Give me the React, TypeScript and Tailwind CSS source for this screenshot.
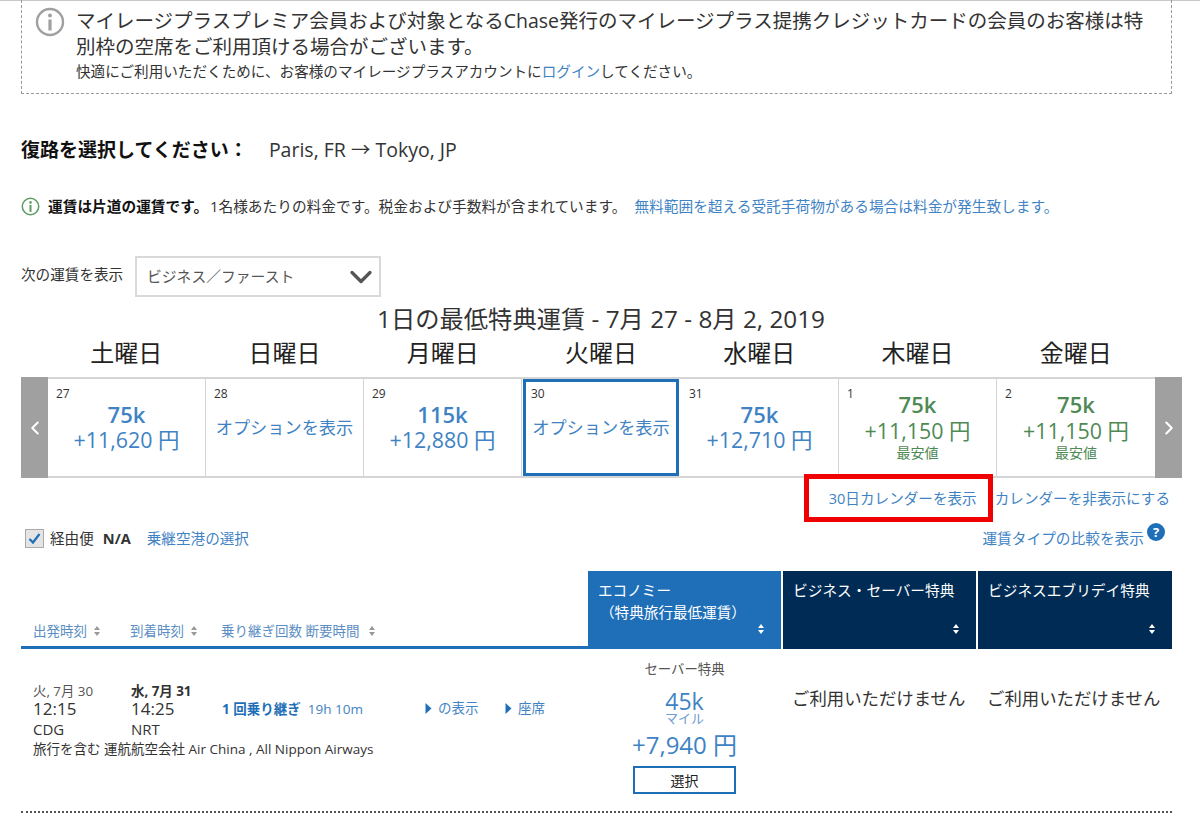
import { ChevronDown, ChevronLeft, ChevronRight } from "lucide-react";

const days = [
  { name: "土曜日", date: "27", miles: "75k", price: "+11,620 円" },
  { name: "日曜日", date: "28" },
  { name: "月曜日", date: "29", miles: "115k", price: "+12,880 円" },
  { name: "火曜日", date: "30", selected: true },
  { name: "水曜日", date: "31", miles: "75k", price: "+12,710 円" },
  { name: "木曜日", date: "1", miles: "75k", price: "+11,150 円", lowest: true },
  { name: "金曜日", date: "2", miles: "75k", price: "+11,150 円", lowest: true },
];

const InfoIcon = ({ size, color }: { size: number; color: string }) => (
  <svg width={size} height={size} viewBox="0 0 30 30" fill="none" className="shrink-0">
    <circle cx="15" cy="15" r="13" stroke={color} strokeWidth="2.4" />
    <circle cx="15" cy="8.5" r="2" fill={color} />
    <rect x="13.4" y="12.5" width="3.2" height="11" fill={color} />
  </svg>
);

const SortIcon = ({ color }: { color: string }) => (
  <svg width="8" height="12" viewBox="0 0 8 12" className="shrink-0">
    <path d="M4 1 7 5H1zM4 11 1 7h6z" fill={color} />
  </svg>
);

const Caret = () => (
  <svg width="7" height="13" viewBox="0 0 7 13">
    <path d="M0.5 1 6.5 6.5 0.5 12z" fill="#1f6fb8" />
  </svg>
);

const DayCell = ({ day }: { day: (typeof days)[number] }) => {
  const color = day.lowest ? "text-[#4f8a55]" : "text-[#3f83c4]";
  return (
    <div
      className={`shrink-0 h-full flex flex-col items-center ${
        day.selected ? "w-[156px] border-[3px] border-[#1f6fb8] ml-[1px] mr-[2px]" : "w-[158px] border-r border-[#d5d5d5] last:border-r-0"
      }`}
    >
      <span className={`self-start text-[12px] leading-[14px] text-[#333] ${day.selected ? "pl-[5px] pt-[5px]" : "pl-[8px] pt-[8px]"}`}>
        {day.date}
      </span>
      {day.miles ? (
        <div className={`flex flex-col items-center ${color} ${day.lowest ? "-mt-[10px]" : "mt-0"}`}>
          <span className={`text-[22px] font-semibold ${day.lowest ? "leading-[27px]" : "leading-[26px]"}`}>{day.miles}</span>
          <span className={`text-[21.4px] ${day.lowest ? "leading-[26px]" : "leading-[25px]"}`}>{day.price}</span>
          {day.lowest && <span className="text-[14px] leading-[18px]">最安値</span>}
        </div>
      ) : (
        <span className="text-[17.2px] leading-[24px] text-[#3f83c4] whitespace-nowrap mt-[15px]">オプションを表示</span>
      )}
    </div>
  );
};

export default function App() {
  return (
    <div className="w-[1200px] h-[816px] overflow-hidden bg-white text-[#333] font-['Open_Sans','Noto_Sans_CJK_JP',sans-serif]">
      <div className="h-px bg-[#c8c8c8]" />
      <div className="px-[21px]">
        {/* notice */}
        <div className="w-[1151px] h-[94px] -mt-px border border-t-0 border-dashed border-[#999] flex pl-[13px] pt-[7px]">
          <InfoIcon size={30} color="#a0a0a0" />
          <div className="ml-[11px] mt-[1px]">
            <p className="text-[19.5px] leading-[26px] w-[1078px]">
              マイレージプラスプレミア会員および対象となるChase発行のマイレージプラス提携クレジットカードの会員のお客様は特別枠の空席をご利用頂ける場合がございます。
            </p>
            <p className="text-[14.6px] leading-[20px] mt-[1px]">
              快適にご利用いただくために、お客様のマイレージプラスアカウントに<span className="text-[#3f83c4]">ログイン</span>してください。
            </p>
          </div>
        </div>

        <div className="flex items-center h-[30px] mt-[41px]">
          <span className="text-[19px] font-bold text-[#111]">復路を選択してください：</span>
          <span className="text-[19.5px] ml-[21px]">Paris, FR → Tokyo, JP</span>
        </div>

        <div className="flex items-center h-[24px] mt-[29px] text-[14.7px] whitespace-nowrap">
          <InfoIcon size={19} color="#5c9c62" />
          <span className="font-bold ml-[8px] text-[#111]">運賃は片道の運賃です。</span>
          <span className="ml-[2px]">1名様あたりの料金です。税金および手数料が含まれています。</span>
          <span className="ml-[8px] text-[#3f83c4]">無料範囲を超える受託手荷物がある場合は料金が発生致します。</span>
        </div>

        <div className="flex items-center mt-[38px] h-[41px]">
          <span className="text-[14.6px] w-[114px] -mt-[4px]">次の運賃を表示</span>
          <div className="w-[246px] h-[41px] border-2 border-[#d9d9d9] flex items-center justify-between pl-[10px]">
            <span className="text-[14.8px] text-[#555]">ビジネス／ファースト</span>
            <ChevronDown size={36} strokeWidth={2.2} color="#555" />
          </div>
        </div>

        <div className="text-center text-[24.3px] leading-[32px] mt-[6px] w-[1160px] whitespace-nowrap">
          1日の最低特典運賃 - 7月 27 - 8月 2, 2019
        </div>

        <div className="flex px-[26px] w-[1160px] mt-[1px]">
          {days.map((d) => (
            <div key={d.name} className="flex-1 text-center text-[24px] leading-[34px] text-[#222]">
              {d.name}
            </div>
          ))}
        </div>

        {/* day strip */}
        <div className="flex w-[1161px] h-[101px] mt-[7px] border-y-2 border-[#d5d5d5]">
          <div className="w-[27px] -my-[2px] bg-[#a0a0a0] flex items-center justify-center text-white">
            <ChevronLeft size={22} strokeWidth={2.2} />
          </div>
          <div className="flex flex-1 min-w-0">
            {days.map((d) => (
              <DayCell key={d.name} day={d} />
            ))}
          </div>
          <div className="w-[27px] -my-[2px] bg-[#a0a0a0] flex items-center justify-center text-white">
            <ChevronRight size={22} strokeWidth={2.2} />
          </div>
        </div>

        <div className="relative flex justify-end w-[1149px] mt-[10px] h-[22px] items-center text-[14.6px] text-[#3f83c4] whitespace-nowrap">
          <span className="mr-[18px]">30日カレンダーを表示</span>
          <span>カレンダーを非表示にする</span>
          <div className="absolute left-[783px] top-[-14px] w-[189px] h-[48px] border-[5px] border-[#f00000]" />
        </div>

        <div className="flex items-center justify-between w-[1144px] mt-[14px] h-[26px]">
          <div className="flex items-center pl-[4px] pt-[4px] text-[14.6px]">
            <span className="w-[19px] h-[19px] bg-[#e4e4e4] border border-[#aaa] flex items-center justify-center">
              <svg width="15" height="15" viewBox="0 0 15 15" fill="none">
                <path d="M2.5 8 6 11.5 12.5 3" stroke="#1f6fb8" strokeWidth="2.2" />
              </svg>
            </span>
            <span className="ml-[6px]">経由便</span>
            <span className="ml-[9px] font-bold">N/A</span>
            <span className="ml-[16px] text-[#3f83c4]">乗継空港の選択</span>
          </div>
          <div className="flex items-start text-[14.7px] text-[#3f83c4]">
            <span className="mt-[2px]">運賃タイプの比較を表示</span>
            <span className="ml-[3px] -mt-[2px] w-[18px] h-[18px] rounded-full bg-[#1f6fb8] text-white text-[13px] leading-[18px] font-bold text-center">?</span>
          </div>
        </div>

        {/* table header */}
        <div className="flex h-[78px] w-[1151px] mt-[21px]">
          <div className="w-[567px] border-b-[3px] border-[#1f6fb8] flex items-end pb-[5px] pl-[12px] text-[13.5px] text-[#5b8ec4] whitespace-nowrap">
            <span className="flex items-center gap-[6px] w-[97px]">出発時刻 <SortIcon color="#999" /></span>
            <span className="flex items-center gap-[6px] w-[91px]">到着時刻 <SortIcon color="#999" /></span>
            <span className="flex items-center gap-[8px]">乗り継ぎ回数 断要時間 <SortIcon color="#999" /></span>
          </div>
          <div className="w-[193px] bg-[#1f6fb8] text-white text-[14.6px] leading-[22px] px-[10px] pt-[8px] relative whitespace-nowrap">
            <div>エコノミー</div>
            <div className="pl-[2px]">（特典旅行最低運賃）</div>
            <div className="absolute right-[16px] bottom-[14px]"><SortIcon color="#fff" /></div>
          </div>
          <div className="w-[193px] ml-[2px] bg-[#002b54] text-white text-[14.7px] leading-[22px] px-[10px] pt-[8px] relative whitespace-nowrap">
            <div>ビジネス・セーバー特典</div>
            <div className="absolute right-[16px] bottom-[14px]"><SortIcon color="#fff" /></div>
          </div>
          <div className="w-[194px] ml-[2px] bg-[#002b54] text-white text-[14.7px] leading-[22px] px-[10px] pt-[8px] relative whitespace-nowrap">
            <div>ビジネスエブリデイ特典</div>
            <div className="absolute right-[16px] bottom-[14px]"><SortIcon color="#fff" /></div>
          </div>
        </div>

        {/* flight row */}
        <div className="flex w-[1151px] h-[164px] border-b-2 border-dotted border-[#555]">
          <div className="w-[567px] pl-[12px] pt-[34px]">
            <div className="flex whitespace-nowrap">
              <div className="w-[98px]">
                <div className="text-[13.4px] leading-[16px] text-[#555]">火, 7月 30</div>
                <div className="text-[17px] leading-[19px]">12:15</div>
                <div className="text-[15px] leading-[22px]">CDG</div>
              </div>
              <div className="w-[91px]">
                <div className="text-[13.4px] leading-[16px] font-bold">水, 7月 31</div>
                <div className="text-[17px] leading-[19px]">14:25</div>
                <div className="text-[15px] leading-[22px]">NRT</div>
              </div>
              <div className="w-[203px] pt-[16px] text-[13.5px] leading-[20px] text-[#1f6fb8]">
                <span className="font-bold">1 回乗り継ぎ</span>
                <span className="ml-[7px] text-[#3f83c4]">19h 10m</span>
              </div>
              <div className="w-[80px] pt-[15px] flex items-center h-[35px] gap-[6px] text-[13.5px] text-[#3f83c4]"><Caret />の表示</div>
              <div className="pt-[15px] flex items-center h-[35px] gap-[6px] text-[13.5px] text-[#3f83c4]"><Caret />座席</div>
            </div>
            <div className="text-[13.5px] leading-[18px] whitespace-nowrap">旅行を含む 運航航空会社 Air China , All Nippon Airways</div>
          </div>
          <div className="w-[193px] flex flex-col items-center pt-[11px]">
            <div className="text-[13.4px] leading-[18px] text-[#555]">セーバー特典</div>
            <div className="text-[23px] leading-[24px] mt-[11px] text-[#3f83c4]">45k</div>
            <div className="text-[13px] leading-[11px] text-[#6f9bd0]">マイル</div>
            <div className="text-[24px] leading-[32px] mt-[5px] text-[#3f83c4]">+7,940 円</div>
            <div className="w-[103px] h-[28px] mt-[5px] border-2 border-[#1f6fb8] flex items-center justify-center text-[14px] text-[#222]">選択</div>
          </div>
          <div className="w-[195px] pl-[11px] pt-[36px] text-[17.4px] leading-[26px] whitespace-nowrap">ご利用いただけません</div>
          <div className="pl-[11px] pt-[36px] text-[17.4px] leading-[26px] whitespace-nowrap">ご利用いただけません</div>
        </div>
      </div>
    </div>
  );
}
